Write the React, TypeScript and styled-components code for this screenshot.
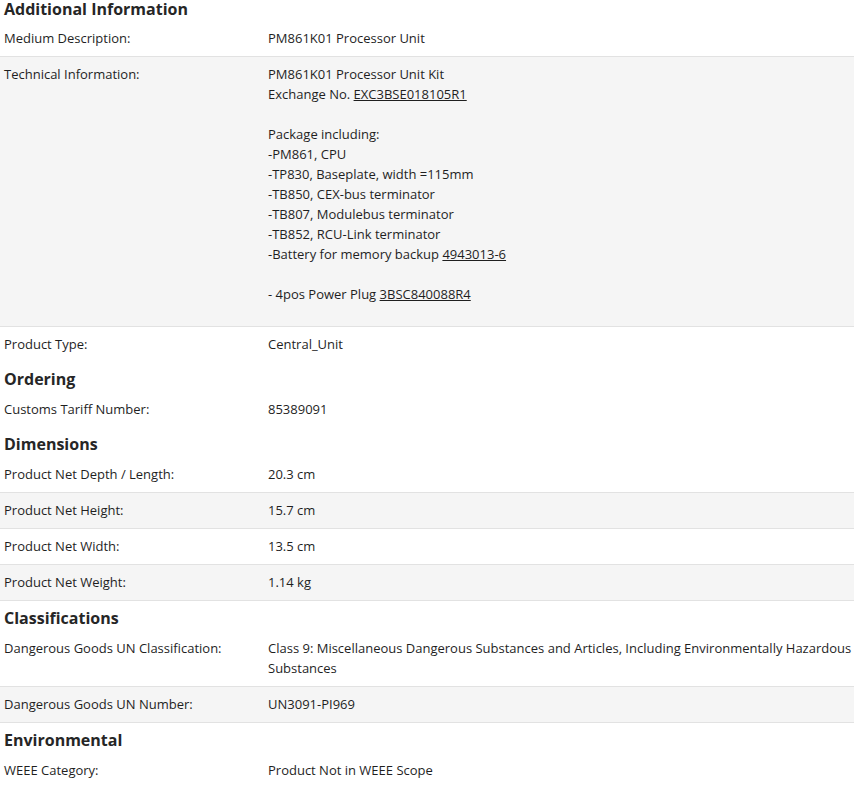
import React from "react";
import styled, { createGlobalStyle } from "styled-components";

const G = createGlobalStyle`
  body { margin: 0; font-family: "Open Sans", "Noto Sans", Arial, sans-serif; color: #1f1f1f; background: #fff; }
`;
const Page = styled.div`padding: 1px 0 0 4px; width: 850px;`;
const H = styled.h2<{ $first?: boolean }>`
  margin: ${p => (p.$first ? "-2px 0 2px" : "7px 0 3px")};
  font-size: 16px; line-height: 20px; font-weight: 700; color: #262626;
`;
const Row = styled.div<{ $alt?: boolean; $pb?: number }>`
  display: grid; grid-template-columns: 264px 1fr;
  background: ${p => (p.$alt ? "#f5f5f5" : "#fff")};
  border-top: ${p => (p.$alt ? "1px solid #e2e2e2" : "none")};
  border-bottom: ${p => (p.$alt ? "1px solid #e2e2e2" : "none")};
  margin-left: -4px; padding-left: 4px;
  font-size: 13px; line-height: 20px; padding-top: 7px; padding-bottom: ${p => p.$pb ?? 8}px;
`;
const Cell = styled.div`white-space: pre-line;`;
const L = styled.span`text-decoration: underline;`;

const R = ({ l, v, alt, pb }: { l: string; v: React.ReactNode; alt?: boolean; pb?: number }) => (
  <Row $alt={alt} $pb={pb}><Cell>{l}</Cell><Cell>{v}</Cell></Row>
);

export default function App() {
  return (
    <Page>
      <G />
      <H $first>Additional Information</H>
      <R l="Medium Description:" v="PM861K01 Processor Unit" />
      <R alt pb={22} l="Technical Information:" v={<>
        {"PM861K01 Processor Unit Kit\nExchange No. "}<L>EXC3BSE018105R1</L>
        {"\n\nPackage including:\n-PM861, CPU\n-TP830, Baseplate, width =115mm\n-TB850, CEX-bus terminator\n-TB807, Modulebus terminator\n-TB852, RCU-Link terminator\n-Battery for memory backup "}<L>4943013-6</L>
        {"\n\n- 4pos Power Plug "}<L>3BSC840088R4</L>
      </>} />
      <R l="Product Type:" v="Central_Unit" />
      <H>Ordering</H>
      <R l="Customs Tariff Number:" v="85389091" />
      <H>Dimensions</H>
      <R l="Product Net Depth / Length:" v="20.3 cm" />
      <R alt l="Product Net Height:" v="15.7 cm" />
      <R l="Product Net Width:" v="13.5 cm" />
      <R alt l="Product Net Weight:" v="1.14 kg" />
      <H>Classifications</H>
      <R l="Dangerous Goods UN Classification:" v="Class 9: Miscellaneous Dangerous Substances and Articles, Including Environmentally Hazardous Substances" />
      <R alt l="Dangerous Goods UN Number:" v="UN3091-PI969" />
      <H>Environmental</H>
      <R l="WEEE Category:" v="Product Not in WEEE Scope" />
    </Page>
  );
}
